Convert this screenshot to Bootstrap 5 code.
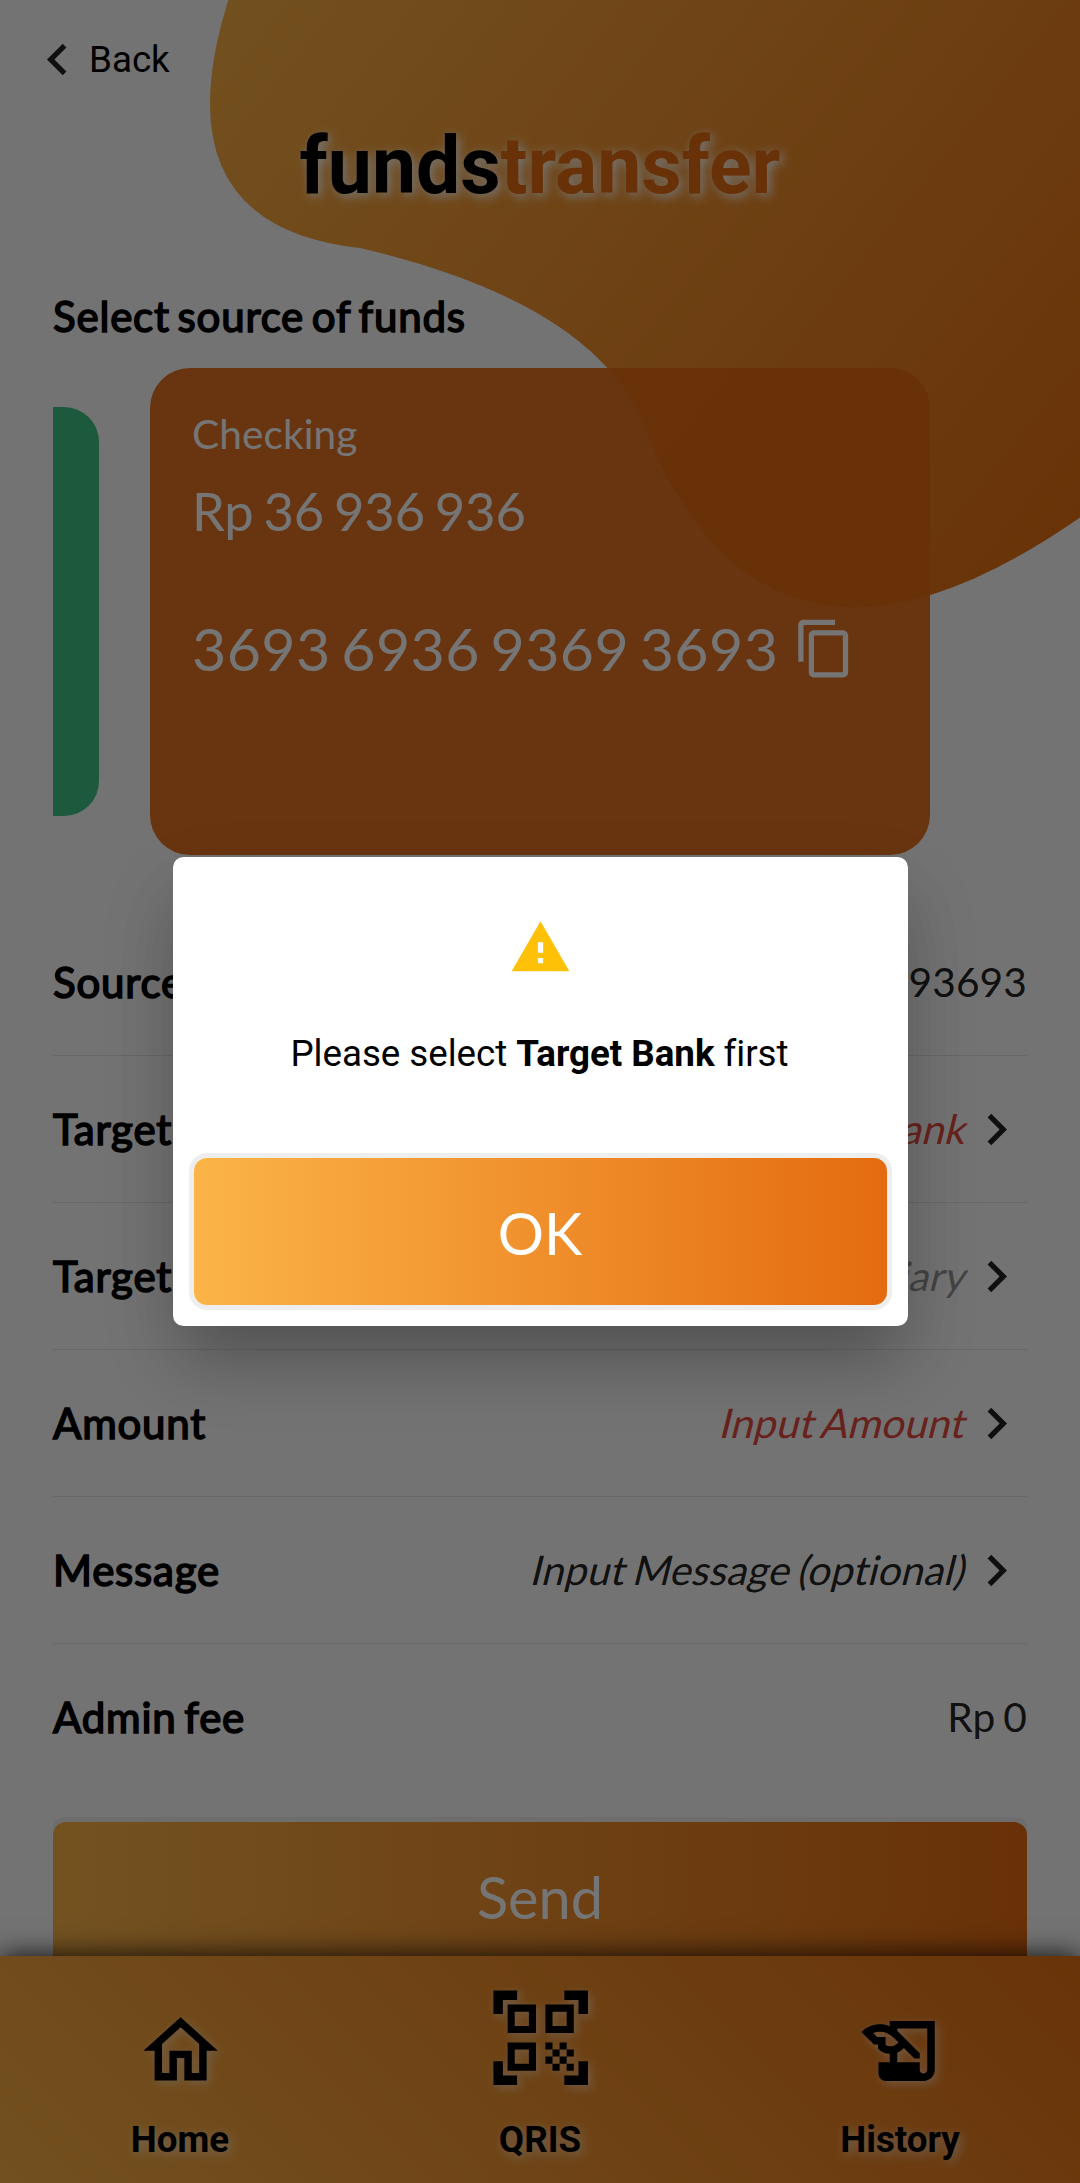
<!DOCTYPE html>
<html lang="en">
<head>
<meta charset="utf-8">
<meta name="viewport" content="width=device-width, initial-scale=1">
<title>Funds transfer</title>
<link href="https://cdn.jsdelivr.net/npm/bootstrap@5.3.0/dist/css/bootstrap.min.css" rel="stylesheet">
<style>
  body { background: #fafafa; color: #000; font-family: Lato, sans-serif; font-size: 40px; line-height: 1.2; }
  .screen { width: 1080px; height: 2183px; }
  .robo { font-family: Roboto, sans-serif; }
  .blob { z-index: 0; }
  .content { z-index: 1; padding: 28px 53px 0; }
  .ico { flex: none; fill: currentColor; display: block; }
  .soft-dark { color: rgba(0,0,0,.87); }
  .back-link { height: 63px; margin-left: -27px; font-size: 36.75px; line-height: 63px; }
  .back-link .ico { width: 63px; height: 63px; color: rgba(0,0,0,.87); }
  .brand-title { font-size: 78.75px; line-height: 94px; margin-top: 28px; font-weight: 700; text-shadow: 3px 3px 11px #fff; }
  .brand-title span { color: #e46b10; }
  .strong-label { font-size: 42px; line-height: 50px; letter-spacing: .8px; word-spacing: -3.8px; -webkit-text-stroke: 1.6px #000; }
  .heading { margin-top: 78px; }
  .carousel-strip { height: 487px; margin-top: 27px; gap: 51px; }
  .side-card { width: 655px; height: 409px; margin-left: -609px; border-radius: 35px; background: #3dc285; }
  .main-card { width: 780px; height: 487px; padding: 42px; border-radius: 40px; background: rgba(227,106,18,.93); color: #fff; }
  .acc-type { font-size: 40.6px; line-height: 48px; letter-spacing: .1px; }
  .acc-balance { font-size: 52.5px; line-height: 63px; margin-top: 21px; word-spacing: -3.4px; letter-spacing: -.15px; }
  .acc-number { font-size: 59px; line-height: 70px; margin-top: 72px; letter-spacing: .45px; word-spacing: -5px; gap: 14.5px; }
  .acc-number .ico { width: 63px; height: 63px; margin-bottom: 2px; }
  .details { margin-top: 54px; }
  .detail-row { height: 147px; border-bottom: 1px solid #e2e2e2; }
  .detail-row:last-child { border-bottom-color: transparent; }
  .detail-row .ico { width: 63px; height: 63px; margin-right: -1px; color: rgba(0,0,0,.87); }
  .detail-value { font-size: 40.7px; line-height: 48px; letter-spacing: .1px; word-spacing: -2.6px; }
  .slanted { display: inline-block; font-style: normal; margin-right: 1.4px; transform: skewX(-14deg); transform-origin: 0 39px; }
  .need { color: #e24a40; }
  .muted { color: rgba(0,0,0,.42); }
  .send-clip { padding-top: 31px; }
  .grad-btn { height: 147px; border: 0; border-radius: 13px; color: #fff; font-size: 57.75px; line-height: 145px; padding: 2px 0 0;
    background: linear-gradient(90deg, #fbb448, #e46b10); box-shadow: 0 0 0 5px #eee; }
  .bottom-nav { z-index: 2; height: 227px; background: linear-gradient(45deg, #fbb448 -7%, #e46b10 108%); box-shadow: 0 0 26px rgba(0,0,0,.9); }
  .nav-cell { width: 360px; font-size: 36.75px; line-height: 44px; font-weight: 700; text-shadow: 3px 3px 11px rgba(255,255,255,.7); }
  .nav-cell .ico { filter: drop-shadow(3px 3px 5px rgba(255,255,255,.5)); }
  .ico-box { height: 162px; padding: 25px 0 0 1px; }
  .ico-box.small-ico { padding-top: 50px; }
  .shade { z-index: 3; background: rgba(0,0,0,.54); }
  .dialog { z-index: 4; width: 735px; height: 469px; top: 857px; left: 172.5px; border-radius: 10.5px; background: #fff; padding: 59px 21px 0;
    box-shadow: 0 40px 60px -12px rgba(0,0,0,.2), 0 34px 80px rgba(0,0,0,.12); }
  .dialog .ico { width: 63px; height: 63px; color: #ffc107; }
  .dialog-text { font-size: 36.75px; line-height: 44px; margin: 52.5px 1px 0 0; letter-spacing: -.04px; }
  .dialog .grad-btn { margin-top: 82px; }
</style>
</head>
<body>
<div class="screen position-relative overflow-hidden">
  <svg class="blob position-absolute top-0 start-0" width="1080" height="700" viewBox="0 0 1080 700" aria-hidden="true">
    <defs>
      <linearGradient id="sunset" gradientUnits="userSpaceOnUse" x1="295" y1="-218" x2="1184.7" y2="491.4">
        <stop offset="0" stop-color="#fbb448"/><stop offset="1" stop-color="#e46b10"/>
      </linearGradient>
    </defs>
    <path fill="url(#sunset)" d="M631.8-640.4Q-41.6 204 360 248Q605.2 305.5 647.1 435.6Q848 911.5 1521.4 69.2Z"/>
  </svg>

  <main class="content position-relative">
    <div class="back-link robo d-flex align-items-center">
      <svg class="ico" viewBox="0 0 24 24"><path d="M15.41 16.59 10.83 12l4.58-4.59L14 6l-6 6 6 6z"/></svg>
      <span>Back</span>
    </div>
    <h1 class="brand-title robo text-center mb-0">funds<span>transfer</span></h1>
    <div class="heading strong-label">Select source of funds</div>

    <section class="carousel-strip d-flex align-items-center overflow-hidden">
      <div class="side-card flex-shrink-0"></div>
      <div class="main-card flex-shrink-0">
        <div class="acc-type">Checking</div>
        <div class="acc-balance">Rp 36 936 936</div>
        <div class="acc-number d-flex align-items-center">
          <span>3693 6936 9369 3693</span>
          <svg class="ico" viewBox="0 0 24 24"><path d="M16 1H4c-1.100 0-2 .9-2 2v14h2V3h12V1zm3 4H8c-1.100 0-2 .9-2 2v14c0 1.100.9 2 2 2h11c1.100 0 2-.9 2-2V7c0-1.100-.9-2-2-2zm0 16H8V7h11v14z"/></svg>
        </div>
      </div>
    </section>

    <section class="details">
      <div class="detail-row d-flex align-items-center justify-content-between">
        <span class="strong-label">Source</span>
        <span class="detail-value soft-dark">3693693693693693</span>
      </div>
      <div class="detail-row d-flex align-items-center">
        <span class="strong-label me-auto">Target Bank</span>
        <em class="detail-value slanted need">Select Bank</em>
        <svg class="ico" viewBox="0 0 24 24"><path d="M8.590 16.590 13.170 12 8.590 7.410 10 6l6 6-6 6z"/></svg>
      </div>
      <div class="detail-row d-flex align-items-center">
        <span class="strong-label me-auto">Target</span>
        <em class="detail-value slanted muted">Beneficiary</em>
        <svg class="ico" viewBox="0 0 24 24"><path d="M8.590 16.590 13.170 12 8.590 7.410 10 6l6 6-6 6z"/></svg>
      </div>
      <div class="detail-row d-flex align-items-center">
        <span class="strong-label me-auto">Amount</span>
        <em class="detail-value slanted need">Input Amount</em>
        <svg class="ico" viewBox="0 0 24 24"><path d="M8.590 16.590 13.170 12 8.590 7.410 10 6l6 6-6 6z"/></svg>
      </div>
      <div class="detail-row d-flex align-items-center">
        <span class="strong-label me-auto">Message</span>
        <em class="detail-value slanted soft-dark">Input Message (optional)</em>
        <svg class="ico" viewBox="0 0 24 24"><path d="M8.590 16.590 13.170 12 8.590 7.410 10 6l6 6-6 6z"/></svg>
      </div>
      <div class="detail-row d-flex align-items-center justify-content-between">
        <span class="strong-label">Admin fee</span>
        <span class="detail-value soft-dark">Rp 0</span>
      </div>
    </section>
    <div class="send-clip overflow-hidden">
      <button type="button" class="grad-btn d-block w-100">Send</button>
    </div>
  </main>

  <nav class="bottom-nav robo position-absolute bottom-0 start-0 w-100 d-flex text-center">
    <div class="nav-cell">
      <div class="ico-box small-ico d-flex justify-content-center">
        <svg class="ico" width="89.25" height="89.25" viewBox="0 0 24 24"><path d="M12 5.690l5 4.500V18h-2v-6H9v6H7v-7.810l5-4.500M12 3L2 12h3v8h6v-6h2v6h6v-8h3L12 3z"/></svg>
      </div>
      Home
    </div>
    <div class="nav-cell">
      <div class="ico-box d-flex justify-content-center">
        <svg class="ico" width="113.400" height="113.400" viewBox="0 0 24 24"><path d="M9.500 6.500v3h-3v-3h3M11 5H5v6h6V5zm-1.500 9.500v3h-3v-3h3M11 13H5v6h6v-6zm6.500-6.500v3h-3v-3h3M19 5h-6v6h6V5zm-6 8h1.500v1.500H13V13zm1.500 1.500H16V16h-1.500v-1.500zM16 13h1.500v1.500H16V13zm-3 3h1.500v1.500H13V16zm1.500 1.500H16V19h-1.500v-1.500zM16 16h1.500v1.500H16V16zm1.500-1.500H19V16h-1.500v-1.500zm0 3H19V19h-1.500v-1.500zM22 7h-2V4h-3V2h5v5zm0 15v-5h-2v3h-3v2h5zM2 22h5v-2H4v-3H2v5zM2 2v5h2V4h3V2H2z"/></svg>
      </div>
      QRIS
    </div>
    <div class="nav-cell">
      <div class="ico-box small-ico d-flex justify-content-center">
        <svg class="ico" width="90" height="90" viewBox="0 0 24 24"><path d="M9 4v1.380c-.83-.33-1.720-.5-2.610-.5-1.790 0-3.580.68-4.950 2.050l3.330 3.330h1.110v1.110c.86.86 1.980 1.310 3.110 1.360V15H6v3c0 1.100.9 2 2 2h10c1.660 0 3-1.340 3-3V4H9zm-1.110 6.410V8.260H5.610L4.570 7.220a5.070 5.070 0 0 1 1.820-.34c1.340 0 2.590.52 3.540 1.460l1.410 1.410-.2.200a2.700 2.700 0 0 1-1.920.8c-.47 0-.93-.12-1.330-.34zM19 17c0 .55-.45 1-1 1s-1-.45-1-1v-2h-6v-2.590c.57-.23 1.100-.57 1.560-1.030l.2-.200L15.590 14H17v-1.410l-6-5.970V6h8v11z"/></svg>
      </div>
      History
    </div>
  </nav>

  <div class="shade position-absolute top-0 start-0 w-100 h-100"></div>

  <div class="dialog position-absolute text-center" role="dialog" aria-modal="true">
    <svg class="ico mx-auto" viewBox="0 0 24 24"><path d="M1 21h22L12 2 1 21zm12-3h-2v-2h2v2zm0-4h-2v-4h2v4z"/></svg>
    <div class="dialog-text robo">Please select <strong>Target Bank</strong> first</div>
    <button type="button" class="grad-btn d-block w-100">OK</button>
  </div>
</div>
<script src="https://cdn.jsdelivr.net/npm/bootstrap@5.3.0/dist/js/bootstrap.bundle.min.js"></script>
</body>
</html>
